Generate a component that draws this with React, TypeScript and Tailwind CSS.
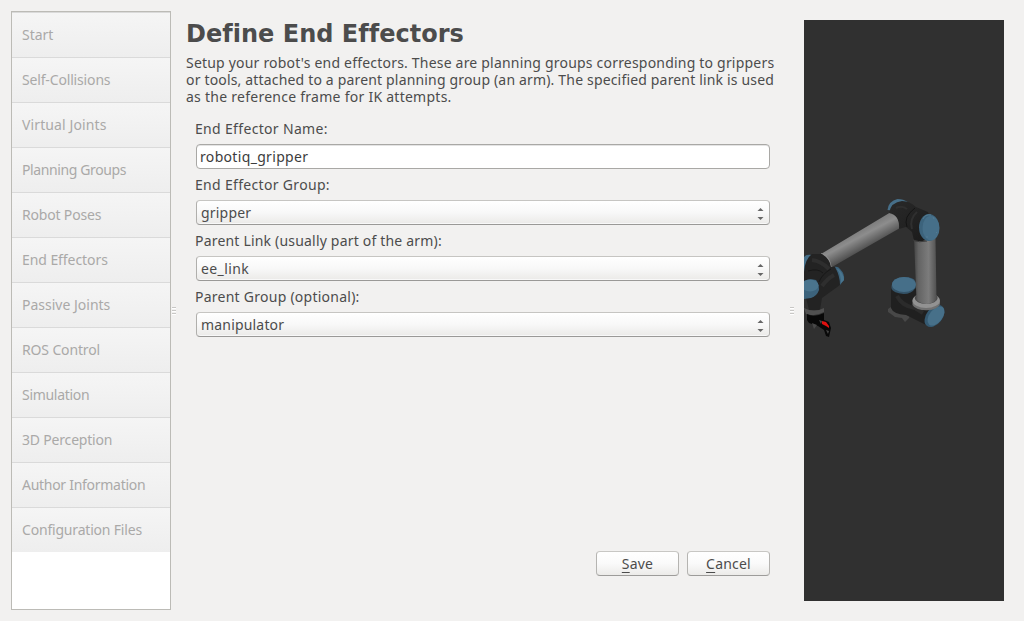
import React from 'react';

const steps = [
  { name: 'Start', track: 'tracking-[-0.05px]' },
  { name: 'Self-Collisions', track: 'tracking-[-0.16px]' },
  { name: 'Virtual Joints', track: 'tracking-[0.12px]' },
  { name: 'Planning Groups', track: 'tracking-[-0.39px]' },
  { name: 'Robot Poses', track: 'tracking-[-0.18px]' },
  { name: 'End Effectors', track: 'tracking-[-0.07px]' },
  { name: 'Passive Joints', track: 'tracking-[0px]' },
  { name: 'ROS Control', track: 'tracking-[-0.14px]' },
  { name: 'Simulation', track: 'tracking-[-0.3px]' },
  { name: '3D Perception', track: 'tracking-[-0.19px]' },
  { name: 'Author Information', track: 'tracking-[-0.28px]' },
  { name: 'Configuration Files', track: 'tracking-[-0.19px]' },
];

function Sidebar() {
  return (
    <nav className="h-[599px] w-40 shrink-0 border border-[#bcbbb6] bg-white">
      {steps.map((s) => (
        <div
          key={s.name}
          className="flex h-[45px] items-center border-t border-[#dadada] bg-linear-to-b from-[#f5f5f5] to-[#eeeeee] pb-0.5 pl-2.5 text-[#aaa9a8]"
        >
          <span className={s.track}>{s.name}</span>
        </div>
      ))}
    </nav>
  );
}

function Grip() {
  return (
    <div className="flex w-1 flex-col gap-0.5">
      <i className="h-px bg-[#c8c7c5] shadow-[0_1px_0_#fff]" />
      <i className="h-px bg-[#c8c7c5] shadow-[0_1px_0_#fff]" />
      <i className="h-px bg-[#c8c7c5] shadow-[0_1px_0_#fff]" />
    </div>
  );
}

function Label({ children, track }: { children: string; track: string }) {
  return (
    <div className="flex h-[31px] items-center pl-[9px]">
      <span className={track}>{children}</span>
    </div>
  );
}

function Combo({ children, track }: { children: string; track: string }) {
  return (
    <div className="ml-2.5 flex h-[25px] w-[574px] items-center justify-between rounded-[4px] border border-[#b0afac] border-t-[#c6c5c2] border-b-[#9a9997] bg-linear-to-b from-white via-[#f8f8f8] via-50% to-[#ebeae8] pr-[5px] pl-1 shadow-[inset_0_-1px_0_#f8f8f8]">
      <span className={track}>{children}</span>
      <svg width="7" height="13" viewBox="0 0 7 13" className="mt-1" fill="#666">
        <path d="M3.5 0 6.5 3H.5z" />
        <path d="M3.5 12 .5 9h6z" />
      </svg>
    </div>
  );
}

function PushButton({ first, rest }: { first: string; rest: string }) {
  return (
    <button className="flex h-[25px] w-[83px] items-center justify-center rounded-[4px] border border-[#b5b4b1] border-t-[#c8c7c4] border-b-[#9d9c9a] bg-linear-to-b from-white via-[#fafafa] via-50% to-[#ecebe9]">
      <span className="tracking-[0.2px]">
        <span className="underline decoration-1 underline-offset-[3px]">{first}</span>
        {rest}
      </span>
    </button>
  );
}

function RobotView() {
  return (
    <svg width="200" height="581" viewBox="804 20 200 581" className="shrink-0 bg-[#303030]">
      <defs>
        <linearGradient id="arm" gradientUnits="userSpaceOnUse" x1="855" y1="232" x2="864" y2="249">
          <stop offset="0" stopColor="#7c7c7c" />
          <stop offset=".35" stopColor="#8d8d8d" />
          <stop offset="1" stopColor="#515151" />
        </linearGradient>
        <linearGradient id="post" x1="0" x2="1" y1="0" y2="0">
          <stop offset="0" stopColor="#444" />
          <stop offset=".2" stopColor="#636363" />
          <stop offset=".65" stopColor="#7c7c7c" />
          <stop offset="1" stopColor="#505050" />
        </linearGradient>
        <linearGradient id="body" x1="0" x2="1" y1="0" y2="1">
          <stop offset="0" stopColor="#292929" />
          <stop offset=".5" stopColor="#222" />
          <stop offset="1" stopColor="#191919" />
        </linearGradient>
      </defs>

      {/* base */}
      <path d="M888 309l3-2 19 8-1 3-4 4-3-4-7-1-4-3-3-2z" fill="#484848" />
      <path d="M891 288v20q2 6 15 7l22 11 12-14-8-12-17-12z" fill="#202020" />
      <path d="M897 296q5 10 18 12l8 5" stroke="#2b2b2b" strokeWidth="4" fill="none" />
      <path d="M891.5 286q0-8 12-9 11 0 12 5v6q-4 6-12 6-10-1-12-5z" fill="#345368" />
      <ellipse cx="904" cy="284.5" rx="12" ry="7.5" fill="#466f89" />
      <ellipse cx="934.5" cy="316" rx="8" ry="12.5" transform="rotate(38 934.5 316)" fill="#355a72" />
      <ellipse cx="936" cy="316" rx="6.5" ry="11" transform="rotate(38 936 316)" fill="#477089" />

      {/* upright link */}
      <path d="M912.5 300a14 8 0 0 0 27.5 0v4a14 7 0 0 1-27.500 1z" fill="#707070" />
      <ellipse cx="926.2" cy="300.5" rx="13.7" ry="7.500" fill="#929292" />
      <ellipse cx="926.2" cy="298" rx="11.5" ry="6" fill="#4b4b4b" />
      <path d="M914 238h21.500l1 62q-10 8-20 0z" fill="url(#post)" />

      {/* shoulder to wrist tube */}
      <path d="M821 254l70-42q8 2 9 16l-68 39q-3-9-11-13z" fill="url(#arm)" />
      <path d="M821 254q8 2 10 13" stroke="#929292" strokeWidth="1.500" fill="none" />

      {/* elbow */}
      <path d="M887.500 210q1-9 10-11 6 0 10 3l-10 9z" fill="#466f89" />
      <path d="M889 213q2-11 13-12 8 0 14 6l12 5 4 10-5 18q-7 2-13 1l-2-9-6-5-7 2q1-14-10-16z" fill="url(#body)" />
      <path d="M896 208q6-3 11 1m10 3q-8 7-5 17" stroke="#2f2f2f" strokeWidth="2" fill="none" />
      <path d="M907 227q-4-10 8-19" stroke="#141414" fill="none" />
      <path d="M913 240q6 3 14 1" stroke="#3c3c3c" fill="none" />
      <ellipse cx="929" cy="227.500" rx="10" ry="13.500" fill="#3c637c" />
      <ellipse cx="931" cy="228" rx="8.500" ry="12.300" fill="#466f89" />
      <path d="M923 219q2-5 8-4m2 2l1 2m3 13l-1 1m-10 4h2" stroke="#527b92" fill="none" />

      {/* wrist */}
      <path d="M804 257q2-3 8-2l-4 13-4 8z" fill="#466f89" />
      <path d="M834 267q4-1 6 2 5 5 4 11l-4 5-5 1z" fill="#3c637c" />
      <path d="M838 269q6 5 6 11l-3 3q0-9-4-14z" fill="#49758e" />
      <path d="M804 272q1-13 8-18l10 0q8 5 9 13l4 0q5 9 5 18l-18 13-2 12h-11l-5-20z" fill="#232323" />
      <path d="M812 260q9 1 17 9m-7 17q5-7 12-11" stroke="#2e2e2e" strokeWidth="4" fill="none" />
      <path d="M808 271q10-3 15 2m-4 9q3-8 12-13" stroke="#171717" fill="none" />
      <path d="M804 281q5-3 12-1 3 4 3 10-2 6-8 8l-7 1z" fill="#3c637c" />
      <ellipse cx="810" cy="285.500" rx="8.500" ry="6" fill="#4a748d" />
      <path d="M804 308q10 5 20 0v4q-9 5-18 2z" fill="#505050" />

      {/* gripper */}
      <path d="M807 314q7 4 17-1v7l5 2 2 6-2 9-3-1-2-6-6-4-9-3-2-3z" fill="#080808" />
      <path d="M812 323l5 2-3 4zM819 320l3 1-1 3z" fill="#484848" />
      <path d="M822 321l4 1 3 4v2l-3-2-4-2z" fill="#e01010" />
      <path d="M826 330l3 1-1 3z" fill="#444" />
    </svg>
  );
}

export default function App() {
  return (
    <div className="flex h-[621px] w-[1024px] overflow-hidden bg-[#f2f1f0] pt-[11px] pl-[11px] font-['Noto_Sans','Open_Sans',sans-serif] text-[14px] leading-[17px] text-[#4c4c4c]">
      <Sidebar />
      <div className="mt-[296px] w-[15px] shrink-0 pl-px">
        <Grip />
      </div>
      <main className="w-[604px] shrink-0">
        <h1 className="mt-[9px] h-7 font-['DejaVu_Sans',sans-serif] text-[24px] leading-[28px] font-bold tracking-[0.02px] whitespace-nowrap">
          Define End Effectors
        </h1>
        <p className="mt-[6px] h-[58px] whitespace-nowrap">
          <span className="block tracking-[0.2px]">Setup your robot's end effectors. These are planning groups corresponding to grippers</span>
          <span className="block tracking-[0.17px]">or tools, attached to a parent planning group (an arm). The specified parent link is used</span>
          <span className="block tracking-[0.26px]">as the reference frame for IK attempts.</span>
        </p>
        <div className="pt-px">
          <Label track="tracking-[0.33px]">End Effector Name:</Label>
          <div className="ml-2.5 flex h-[25px] w-[574px] items-center rounded-[4px] border border-[#a9a8a5] bg-white pl-[3px] text-[#3c3c3c] shadow-[inset_0_1px_0_#e4e4e4]">
            <span className="tracking-[0.33px]">robotiq_gripper</span>
          </div>
          <Label track="tracking-[0.32px]">End Effector Group:</Label>
          <Combo track="tracking-[0.2px]">gripper</Combo>
          <Label track="tracking-[0.19px]">Parent Link (usually part of the arm):</Label>
          <Combo track="tracking-[0.4px]">ee_link</Combo>
          <Label track="tracking-[0.25px]">Parent Group (optional):</Label>
          <Combo track="tracking-[0.18px]">manipulator</Combo>
        </div>
        <div className="mt-[214px] flex justify-end gap-2 pr-5">
          <PushButton first="S" rest="ave" />
          <PushButton first="C" rest="ancel" />
        </div>
      </main>
      <div className="mt-[296px] w-[14px] shrink-0">
        <Grip />
      </div>
      <div className="pt-[9px]">
        <RobotView />
      </div>
    </div>
  );
}
